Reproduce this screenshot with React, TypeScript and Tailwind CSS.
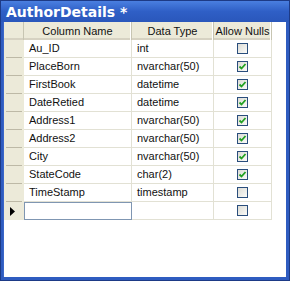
const rows = [
  { name: 'Au_ID', type: 'int', nulls: false },
  { name: 'PlaceBorn', type: 'nvarchar(50)', nulls: true },
  { name: 'FirstBook', type: 'datetime', nulls: true },
  { name: 'DateRetied', type: 'datetime', nulls: true },
  { name: 'Address1', type: 'nvarchar(50)', nulls: true },
  { name: 'Address2', type: 'nvarchar(50)', nulls: true },
  { name: 'City', type: 'nvarchar(50)', nulls: true },
  { name: 'StateCode', type: 'char(2)', nulls: true },
  { name: 'TimeStamp', type: 'timestamp', nulls: false },
];

function CheckBox({ checked }: { checked: boolean }) {
  return (
    <div className="w-[11px] h-[11px] border border-[#2a4e7c] bg-gradient-to-br from-[#dcdcd6] to-[#fbfbf8] flex items-center justify-center">
      {checked && (
        <svg width="9" height="9" viewBox="0 0 9 9">
          <path d="M1.5 4.5 L3.5 6.5 L7.5 2" fill="none" stroke="#21a121" strokeWidth="1.8" />
        </svg>
      )}
    </div>
  );
}

function HeaderCell({ label, w }: { label: string; w: string }) {
  return (
    <div
      className={`${w} h-full flex items-center justify-center border-r border-[#c7c5b2] shadow-[inset_-1px_0_0_#fff,inset_0_-2px_0_#d6d2c2]`}
    >
      {label}
    </div>
  );
}

export default function App() {
  return (
    <div
      className="w-[290px] h-[281px] flex flex-col bg-[#2f5cc0] border border-[#1d3a86] text-[11px] text-[#111]"
      style={{ fontFamily: '"Liberation Sans", Arial, sans-serif' }}
    >
      {/* Title bar */}
      <div className="h-[21px] shrink-0 bg-gradient-to-b from-[#4a7fe0] via-[#2f5fc6] to-[#2a57bb] flex items-center pl-[5px]">
        <span className="text-white font-bold text-[14px] leading-none" style={{ fontFamily: '"DejaVu Sans", sans-serif' }}>
          AuthorDetails *
        </span>
      </div>

      {/* Body */}
      <div className="flex-1 ml-[2px] mr-[3px] mb-[3px] bg-white border-l border-[#3a66c8] flex flex-col">
        {/* Header */}
        <div className="h-[18px] flex bg-[#ecead9] w-[268px]">
          <div className="w-[20px] h-full border-r border-[#c7c5b2] shadow-[inset_0_-2px_0_#d6d2c2]" />
          <HeaderCell label="Column Name" w="w-[108px]" />
          <HeaderCell label="Data Type" w="w-[82px]" />
          <HeaderCell label="Allow Nulls" w="w-[58px]" />
        </div>

        {rows.map((r) => (
          <div key={r.name} className="h-[18px] flex w-[268px]">
            <div className="w-[20px] h-full bg-[#ecead9] flex items-end px-[2px]">
              <div className="w-full h-px bg-[#bdb9a6]" />
            </div>
            <div className="w-[108px] h-full border-r border-b border-[#e2e1d4] flex items-center pl-[5px]">{r.name}</div>
            <div className="w-[82px] h-full border-r border-b border-[#e2e1d4] flex items-center pl-[5px]">{r.type}</div>
            <div className="w-[58px] h-full border-r border-b border-[#e2e1d4] flex items-center justify-center">
              <CheckBox checked={r.nulls} />
            </div>
          </div>
        ))}

        {/* New row */}
        <div className="h-[18px] flex w-[268px]">
          <div className="w-[20px] h-full bg-[#ecead9] flex items-center pl-[6px]">
            <svg width="6" height="9" viewBox="0 0 6 9">
              <path d="M0 0 L5 4.5 L0 9 Z" fill="#000" />
            </svg>
          </div>
          <div className="w-[108px] h-full border border-[#7f96b2] bg-white" />
          <div className="w-[82px] h-full border-r border-b border-[#e2e1d4]" />
          <div className="w-[58px] h-full border-r border-b border-[#e2e1d4] flex items-center justify-center">
            <CheckBox checked={false} />
          </div>
        </div>
      </div>
    </div>
  );
}
